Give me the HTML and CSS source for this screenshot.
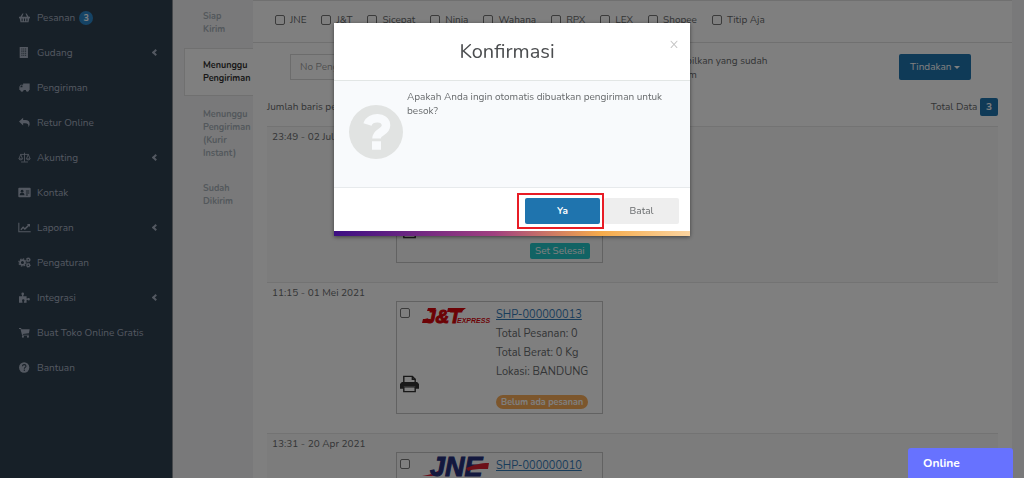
FILE: index.html
```
<!DOCTYPE html>
<html lang="id">
<head>
    <meta charset="UTF-8">
    <meta name="viewport" content="width=device-width, initial-scale=1.0">
    <title>Pengiriman</title>
    <link rel="stylesheet" href="styles.css">
</head>
<body>

    <div class="wrapper">
        <nav class="sidebar">
            <a href="#">
                <svg viewBox="0 0 16 16"><path d="M2 7 5 2h1.600L4.500 7h7L9.400 2H11l3 5h2v2h-1l-1.200 6H2.200L1 9H0V7z"/><path d="M4.500 9.500v4M8 9.500v4M11.500 9.500v4" class="cut"/></svg>
                Pesanan <span class="count">3</span>
            </a>
            <a href="#">
                <svg viewBox="0 0 16 16"><path d="M1 0h12v16H1z"/><path d="M3.500 3h7M3.500 6h7M3.500 9h7M3.500 12h7" class="cut" stroke-dasharray="1.500 1.200"/></svg>
                Gudang <span class="arrow"></span>
            </a>
            <a href="#">
                <svg viewBox="0 0 16 16"><path d="M6 2h9.500v9.500h-1a2.300 2.300 0 0 1-4.600 0H6.600a2.300 2.300 0 0 1-4.600 0H.5V7l2-3H6zM5 5.200H3L1.700 7.500H5z" fill-rule="evenodd"/><circle cx="4.300" cy="12" r="1.700"/><circle cx="12.200" cy="12" r="1.700"/></svg>
                Pengiriman
            </a>
            <a href="#">
                <svg viewBox="0 0 16 16"><path d="M6 1v3.500h3c4.500 0 6.500 2.500 6.500 5.500 0 2-1 3.500-2 4.500.8-3.500-.5-5.500-4.500-5.500H6v3.500L0 6.700z"/></svg>
                Retur Online
            </a>
            <a href="#">
                <svg viewBox="0 0 18 16" class="line"><path d="M9 1v13M4 14.500h10M3 3.500h12M3.500 3.500.8 10h5.400zM14.500 3.500 11.800 10h5.400zM.8 10c1 2 4.400 2 5.400 0M11.800 10c1 2 4.400 2 5.400 0"/></svg>
                Akunting <span class="arrow"></span>
            </a>
            <a href="#">
                <svg viewBox="0 0 18 16"><rect y="1" width="18" height="14" rx="1.500"/><g class="hole"><circle cx="5.500" cy="6" r="2"/><path d="M2 12c0-3 1.500-3.500 3.500-3.500S9 9 9 12zM11 5h5v1.500h-5zM11 8h5v1.500h-5zM11 11h3v1.300h-3z"/></g></svg>
                Kontak
            </a>
            <a href="#">
                <svg viewBox="0 0 18 16"><path d="M0 1h1.500v12.500H18V15H0z"/><path d="m3 10.500 4-4.200 2.500 2.500L14 4.300 12.500 2.800H17v4.500l-1.500-1.500-6 5.800L7 9l-2.500 3z"/></svg>
                Laporan <span class="arrow"></span>
            </a>
            <a href="#">
                <svg viewBox="0 0 18 16" class="line"><circle cx="6" cy="8" r="3.500" stroke-width="2.600"/><circle cx="6" cy="8" r="5.300" stroke-width="1.500" stroke-dasharray="2.200 1.960"/><circle cx="14.500" cy="4" r="2" stroke-width="1.700"/><circle cx="14.500" cy="4" r="3" stroke-dasharray="1.200 1.150"/><circle cx="14.500" cy="12" r="2" stroke-width="1.700"/><circle cx="14.500" cy="12" r="3" stroke-dasharray="1.200 1.150"/></svg>
                Pengaturan
            </a>
            <a href="#">
                <svg viewBox="0 0 16 16"><path d="M0 6h4.500C4.800 4.700 3.500 4 3.500 2.500a1.800 1.800 0 0 1 3.800 0C7.300 4 6 4.700 6.300 6H11v3.500c1.200.5 1.800-.8 3-.8a1.700 1.700 0 0 1 0 3.600c-1.200 0-1.800-1.300-3-.8v4H7.200c-.4-1.400.8-1.800.8-3a1.800 1.800 0 0 0-3.600 0c0 1.200 1 1.600.6 3H0z"/></svg>
                Integrasi <span class="arrow"></span>
            </a>
            <a href="#">
                <svg viewBox="0 0 16 16"><path d="M0 1.500h3l.5 1.700H15.500l-1 6-9 1 .3 1h8.500v1.300H4.500L2.200 3H0z"/><circle cx="5.700" cy="14" r="1.500"/><circle cx="13" cy="14" r="1.500"/></svg>
                Buat Toko Online Gratis
            </a>
            <a href="#">
                <svg viewBox="0 0 16 16"><circle cx="7.500" cy="8" r="7.500"/><path d="M5 6.200c.2-3.300 5.200-3 5.200 0 0 1.700-2.500 1.700-2.500 3.500M7.700 11v2" class="cut" stroke-width="2"/></svg>
                Bantuan
            </a>
        </nav>

        <div class="tabs">
            <a href="#">Siap<br>Kirim</a>
            <a href="#" class="active">Menunggu Pengiriman</a>
            <a href="#">Menunggu Pengiriman (Kurir Instant)</a>
            <a href="#">Sudah Dikirim</a>
        </div>

        <main class="panel">
            <div class="couriers">
                <label><input type="checkbox"> JNE</label>
                <label><input type="checkbox"> J&amp;T</label>
                <label><input type="checkbox"> Sicepat</label>
                <label><input type="checkbox"> Ninja</label>
                <label><input type="checkbox"> Wahana</label>
                <label><input type="checkbox"> RPX</label>
                <label><input type="checkbox"> LEX</label>
                <label><input type="checkbox"> Shopee</label>
                <label><input type="checkbox"> Titip Aja</label>
            </div>

            <div class="search">
                <input type="text" class="search-input" placeholder="No Pengiriman" aria-label="No Pengiriman">
                <label class="sent"><input type="checkbox"> <span>Tampilkan yang sudah dikirim</span></label>
                <button type="button" class="btn action">Tindakan <span class="caret"></span></button>
            </div>

            <div class="summary">
                <span>Jumlah baris per halaman</span>
                <span>Total Data <span class="total">3</span></span>
            </div>

            <div class="rows">
                <section class="row">
                    <time>23:49 - 02 Jul 2021</time>
                    <div class="card tall">
                        <div class="card-left">
                            <input type="checkbox" aria-label="Pilih pengiriman">
                            <svg class="printer" viewBox="0 0 20 18"><path d="M4 7V1h9l3 3v3M4 12v5h12v-5z"/><path d="M13 1v3h3"/><path class="solid" d="M2 7h16l2 2v5h-4v-3H4v3H0V9z"/></svg>
                        </div>
                        <div class="logo"></div>
                        <div class="detail">
                            <button type="button" class="done">Set Selesai</button>
                        </div>
                    </div>
                </section>

                <section class="row">
                    <time>11:15 - 01 Mei 2021</time>
                    <div class="card">
                        <div class="card-left">
                            <input type="checkbox" aria-label="Pilih SHP-000000013">
                            <svg class="printer" viewBox="0 0 20 18"><path d="M4 7V1h9l3 3v3M4 12v5h12v-5z"/><path d="M13 1v3h3"/><path class="solid" d="M2 7h16l2 2v5h-4v-3H4v3H0V9z"/></svg>
                        </div>
                        <svg class="logo jnt" viewBox="0 0 68 22" role="img" aria-label="J&amp;T Express">
                            <path d="M1 14h8l-1 4H0zM6 3h8l-1 3H5zM26 3h18l-5 4H25z"/>
                            <text x="3" y="18" font-size="19" stroke-width="1">J&amp;T</text>
                            <text x="35" y="18" font-size="7">EXPRESS</text>
                        </svg>
                        <div class="detail">
                            <a href="#">SHP-000000013</a>
                            <span>Total Pesanan: 0</span>
                            <span>Total Berat: 0 Kg</span>
                            <span>Lokasi: BANDUNG</span>
                            <span class="empty">Belum ada pesanan</span>
                        </div>
                    </div>
                </section>

                <section class="row">
                    <time>13:31 - 20 Apr 2021</time>
                    <div class="card">
                        <div class="card-left">
                            <input type="checkbox" aria-label="Pilih SHP-000000010">
                        </div>
                        <svg class="logo jne" viewBox="0 0 68 22" role="img" aria-label="JNE">
                            <path class="red" d="M0 20c8-1 12-3 18-6l-3 6z"/>
                            <text x="8" y="20" font-size="27" stroke-width="1">JNE</text>
                            <path class="red" d="M44 12c8-3 14-5 23-5l-1 6c-9 0-14 0-20 2z"/>
                        </svg>
                        <div class="detail">
                            <a href="#">SHP-000000010</a>
                        </div>
                    </div>
                </section>
            </div>
        </main>
    </div>

    <div class="overlay">
        <div class="modal" role="dialog" aria-labelledby="modalTitle">
            <div class="modal-header">
                <h1 id="modalTitle">Konfirmasi</h1>
                <button type="button" class="close" aria-label="Tutup">&times;</button>
            </div>
            <div class="modal-body">
                <svg viewBox="0 0 54 54"><circle cx="27" cy="27" r="27"/><path d="M18.500 19.500C21 11 37 11 37 20.500c0 7-9.500 6-9.500 13M23 40.500h9"/></svg>
                <p>Apakah Anda ingin otomatis dibuatkan pengiriman untuk besok?</p>
            </div>
            <div class="modal-footer">
                <button type="button" class="btn yes">Ya</button>
                <button type="button" class="btn cancel">Batal</button>
            </div>
        </div>
    </div>

    <button type="button" class="chat">Online</button>

</body>
</html>
```

FILE: styles.css
```
* {
    box-sizing: border-box;
}
body {
    margin: 0;
    font-family: Nunito, Lato, sans-serif;
    font-size: 10px;
    line-height: 14px;
    color: #676a6c;
    background: #f3f3f4;
}
a {
    color: inherit;
    text-decoration: none;
}
button,
input {
    font: inherit;
}
button {
    cursor: pointer;
}
input[type="checkbox"] {
    appearance: none;
    flex: none;
    width: 10px;
    height: 10px;
    margin: 0;
    border: 1px solid #767676;
    border-radius: 2px;
    background: #fff;
}
.wrapper {
    display: flex;
    height: 100vh;
    overflow: hidden;
    padding-right: 12px;
}

/* sidebar */
.sidebar {
    flex: 0 0 173px;
    background: #2f4050;
    border-right: 1px solid #8a9097;
    color: #a7b1c2;
}
.sidebar a {
    display: flex;
    align-items: center;
    height: 35px;
    padding: 0 14px 0 18px;
}
.sidebar svg {
    width: 13px;
    height: 11px;
    margin-right: 6px;
    fill: #a7b1c2;
}
.sidebar .cut {
    fill: none;
    stroke: #2f4050;
    stroke-width: 1.5;
}
.sidebar .hole {
    fill: #2f4050;
}
.sidebar .line {
    fill: none;
    stroke: #a7b1c2;
    stroke-width: 1.2;
}
.count {
    width: 14px;
    height: 14px;
    margin-left: 4px;
    border-radius: 7px;
    background: #2a87cb;
    color: #fff;
    font-size: 9px;
    font-weight: bold;
    text-align: center;
}
.arrow {
    width: 5px;
    height: 5px;
    margin-left: auto;
    border-left: 2px solid #a7b1c2;
    border-bottom: 2px solid #a7b1c2;
    transform: rotate(45deg);
}

/* status tabs */
.tabs {
    flex: 0 0 80px;
    padding-left: 11px;
    font-size: 9px;
    line-height: 13px;
    font-weight: bold;
    color: #a7b1b9;
}
.tabs a {
    display: block;
    padding: 10px 0 12px 19px;
}
.tabs a:nth-child(n+3) {
    padding-top: 12px;
    padding-bottom: 10px;
}
.tabs .active {
    padding: 10px 0 10px 18px;
    background: #fff;
    border: 1px solid #e0e0e0;
    border-right: 0;
    color: #333;
}

/* shipment list */
.panel {
    flex: 1;
    background: #fff;
    border-top: 1px solid #e0e0e0;
}
.couriers {
    display: flex;
    gap: 15px;
    height: 42px;
    padding: 12px 22px;
    border-bottom: 1px solid #e0e0e0;
}
.couriers label {
    display: flex;
    align-items: center;
    gap: 5px;
    height: 14px;
}
.search {
    display: flex;
    padding: 11px 41px 16px 37px;
}
.search-input {
    width: 320px;
    height: 26px;
    padding: 0 9px;
    border: 1px solid #d8d8d8;
    background: #fff;
}
.search-input::placeholder {
    color: #a0a0a0;
}
.sent {
    display: flex;
    gap: 5px;
    margin-left: 42px;
}
.sent span {
    width: 108px;
}
.btn {
    height: 26px;
    border: 0;
    border-radius: 2px;
    background: #1f74ae;
    color: #fff;
}
.action {
    width: 72px;
    margin-left: auto;
}
.caret {
    display: inline-block;
    border: 3px solid transparent;
    border-top-color: #fff;
    border-bottom: 0;
    vertical-align: middle;
}
.summary {
    display: flex;
    align-items: center;
    justify-content: space-between;
    height: 18px;
    margin: 0 14px 10px;
}
.total {
    display: inline-block;
    width: 18px;
    border-radius: 2px;
    background: #1f74ae;
    color: #fff;
    font-weight: bold;
    line-height: 18px;
    text-align: center;
}
.rows {
    margin: 0 14px;
}
.row {
    display: flex;
    padding: 0 5px 19px;
    border-top: 1px solid #e7e7e7;
}
.row:nth-child(odd) {
    background: #f9f9f9;
}
.row time {
    width: 124px;
    padding-top: 3px;
}
.card {
    display: flex;
    width: 207px;
    height: 113px;
    margin-top: 18px;
    padding: 3px;
    border: 1px solid #c4c4c4;
}
.card.tall {
    height: 118px;
}
.card-left {
    display: flex;
    flex-direction: column;
    justify-content: space-between;
    width: 22px;
    padding: 3px 0 17px;
}
.tall .card-left {
    padding-bottom: 20px;
}
.printer {
    width: 19px;
    height: 18px;
    fill: none;
    stroke: #333;
    stroke-width: 1.5;
}
.printer .solid {
    fill: #333;
    stroke: none;
}
.logo {
    width: 68px;
    height: 22px;
    margin-right: 6px;
    overflow: visible;
    font-family: "Liberation Sans", sans-serif;
    font-weight: bold;
    font-style: italic;
}
.jnt {
    fill: #d9040b;
}
.jnt [stroke-width] {
    stroke: #d9040b;
}
.jne {
    fill: #26307c;
}
.jne [stroke-width] {
    stroke: #26307c;
}
.jne .red {
    fill: #d82030;
}
.detail {
    display: flex;
    flex-direction: column;
    align-items: flex-start;
    font-size: 11px;
    line-height: 19px;
}
.detail a {
    color: #337ab7;
    text-decoration: underline;
}
.detail .empty {
    margin-top: 14px;
    padding: 0 5px;
    border-radius: 7px;
    background: #f8ac59;
    color: #fff;
    font-size: 9px;
    font-weight: bold;
    line-height: 14px;
}
.done {
    height: 16px;
    margin: auto 0 0 34px;
    padding: 0 5px;
    border: 0;
    border-radius: 2px;
    background: #23c6c8;
    color: #fff;
    font-size: 10px;
    line-height: 14px;
}

/* confirmation dialog */
.overlay {
    position: fixed;
    inset: 0;
    padding-top: 23px;
    background: rgba(0, 0, 0, 0.5);
}
.modal {
    width: 356px;
    margin: 0 auto;
    background: #fff;
    box-shadow: 0 1px 4px rgba(0, 0, 0, 0.5);
}
.modal::after {
    content: "";
    display: block;
    height: 5px;
    background: linear-gradient(90deg, #3c0f83, #a04080 45%, #f5ab4b 75%, #fbd4a0);
}
.modal-header {
    position: relative;
    padding: 16px 26px 16px 16px;
    border-bottom: 1px solid #e2e6e5;
    text-align: center;
}
.modal-header h1 {
    margin: 0;
    font-size: 20px;
    line-height: 25px;
    font-weight: normal;
    color: #4b4d4f;
}
.close {
    position: absolute;
    top: 14px;
    right: 10px;
    padding: 0;
    width: 12px;
    border: 0;
    background: none;
    color: #c4c4c4;
    font-size: 15px;
}
.modal-body {
    display: flex;
    gap: 4px;
    min-height: 107px;
    padding: 9px 15px;
    background: #f8fafc;
    border-bottom: 1px solid #e7eaec;
}
.modal-body svg {
    flex: none;
    width: 54px;
    height: 54px;
    margin-top: 15px;
    fill: #e1e3e2;
}
.modal-body path {
    fill: none;
    stroke: #f8fafc;
    stroke-width: 8.5;
}
.modal-body p {
    margin: 0;
}
.modal-footer {
    display: flex;
    justify-content: flex-end;
    gap: 4px;
    padding: 10px 11px 7px;
}
.modal-footer .btn {
    width: 75px;
}
.yes {
    position: relative;
    font-weight: bold;
}
.yes::after {
    content: "";
    position: absolute;
    inset: -5px -4px -5px -8px;
    border: 2px solid #e81c25;
}
.modal-footer .cancel {
    background: #eee;
    color: #676a6c;
}

/* chat widget */
.chat {
    position: fixed;
    right: 11px;
    bottom: 0;
    width: 105px;
    height: 30px;
    padding: 0 15px;
    border: 0;
    border-radius: 3px 3px 0 0;
    background: #6772ff;
    color: #fff;
    font-size: 12px;
    font-weight: bold;
    text-align: left;
}
```
